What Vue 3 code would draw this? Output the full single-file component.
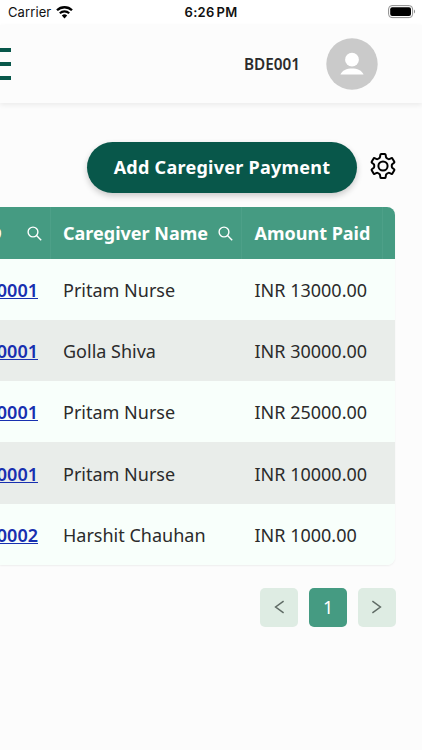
<script setup>
import { ref } from 'vue';

const user = ref('BDE001');
const currentPage = ref(1);

const payments = ref([
  { id: 1, code: '0001', name: 'Pritam Nurse', amount: 'INR 13000.00' },
  { id: 2, code: '0001', name: 'Golla Shiva', amount: 'INR 30000.00' },
  { id: 3, code: '0001', name: 'Pritam Nurse', amount: 'INR 25000.00' },
  { id: 4, code: '0001', name: 'Pritam Nurse', amount: 'INR 10000.00' },
  { id: 5, code: '0002', name: 'Harshit Chauhan', amount: 'INR 1000.00' },
]);
</script>

<template>
  <div class="screen">
    <div class="status">
      <div class="carrier">
        <span>Carrier</span>
        <svg width="17" height="13" viewBox="0 0 17 13" fill="none" stroke="#000">
          <path d="M1 4.3a10.7 10.7 0 0 1 15 0" stroke-width="2.3" />
          <path d="M3.8 7.3a6.8 6.8 0 0 1 9.4 0" stroke-width="2.1" />
          <path d="M8.5 12.4L5.8 9.6a3.9 3.9 0 0 1 5.4 0z" fill="#000" stroke="none" />
        </svg>
      </div>
      <div class="time">6:26<span>PM</span></div>
      <svg class="battery" width="28" height="14" viewBox="0 0 28 14">
        <rect x="0.6" y="0.6" width="24" height="12" rx="3.4" fill="none" stroke="#8e8e8e" />
        <rect x="2.2" y="2.2" width="20.8" height="8.8" rx="2" fill="#000" />
        <path d="M26 4.6c1.4.6 1.4 3.4 0 4z" fill="#8e8e8e" />
      </svg>
    </div>

    <header class="topbar">
      <button class="menu">
        <span></span>
        <span></span>
        <span></span>
      </button>
      <div class="user">
        <span class="username">{{ user }}</span>
        <svg width="52" height="52" viewBox="0 0 52 52">
          <circle cx="26" cy="26" r="25.7" fill="#cacaca" />
          <circle cx="26" cy="21.7" r="6.9" fill="#fff" />
          <path d="M14.4 36.6c1.6-4.4 6.4-6.2 11.6-6.2s10 1.8 11.6 6.2z" fill="#fff" />
        </svg>
      </div>
    </header>

    <div class="actions">
      <button class="add">Add Caregiver Payment</button>
      <svg class="gear" width="26" height="28" viewBox="0 0 26 28" fill="none" stroke="#000" stroke-width="2" stroke-linejoin="round">
        <path d="M11.2 2h3.6q.7 0 .8.7l.4 2.5q.1.6.7.9l1.5.9q.5.3 1.1.1l2.1-.9q.7-.3 1 .3l1.9 3.3q.3.6-.2 1l-1.9 1.5q-.4.4-.4.9v1.6q0 .5.4.9l1.9 1.5q.5.4.2 1l-1.9 3.3q-.3.6-1 .3l-2.1-.9q-.6-.2-1.1.1l-1.5.9q-.6.3-.7.9l-.4 2.500q-.1.7-.8.7h-3.600q-.7 0-.8-.7l-.4-2.500q-.1-.6-.7-.9l-1.500-.9q-.5-.3-1.100-.1l-2.100.9q-.7.3-1-.3L1.700 18.200q-.3-.6.2-1l1.900-1.500q.4-.4.4-.9v-1.600q0-.5-.4-.9l-1.900-1.500q-.5-.4-.2-1L3.600 6.500q.3-.6 1-.3l2.100.9q.6.2 1.100-.1l1.500-.9q.6-.3.7-.9l.4-2.500q.1-.7.8-.7z" />
        <circle cx="13" cy="14" r="4.6" />
      </svg>
    </div>

    <div class="table">
      <div class="row head">
        <div class="cell code">
          <span>ID</span>
          <svg width="15" height="15" viewBox="0 0 15 15" fill="none" stroke="#fff" stroke-width="1.4">
            <circle cx="6" cy="6" r="4.9" />
            <path d="M9.5 9.5l4.7 4.7" />
          </svg>
        </div>
        <div class="cell name">
          <span>Caregiver Name</span>
          <svg width="15" height="15" viewBox="0 0 15 15" fill="none" stroke="#fff" stroke-width="1.4">
            <circle cx="6" cy="6" r="4.9" />
            <path d="M9.5 9.5l4.7 4.7" />
          </svg>
        </div>
        <div class="cell amount">Amount Paid</div>
        <div class="cell"></div>
      </div>
      <div class="row" v-for="item in payments" :key="item.id">
        <div class="cell code"><a>{{ item.code }}</a></div>
        <div class="cell name">{{ item.name }}</div>
        <div class="cell amount">{{ item.amount }}</div>
        <div class="cell"></div>
      </div>
    </div>

    <div class="pagination">
      <button class="page">
        <svg width="11" height="14" viewBox="0 0 11 14" fill="none" stroke="#5f6b65" stroke-width="1.5">
          <path d="M9.6 1.2L1.6 7l8 5.8" />
        </svg>
      </button>
      <button class="page active">{{ currentPage }}</button>
      <button class="page">
        <svg width="11" height="14" viewBox="0 0 11 14" fill="none" stroke="#5f6b65" stroke-width="1.5">
          <path d="M1.4 1.2l8 5.8-8 5.8" />
        </svg>
      </button>
    </div>
  </div>
</template>

<style>
body {
  margin: 0;
  background: #fcfcfc;
}
</style>

<style scoped>
.screen {
  width: 422px;
  height: 750px;
  overflow: hidden;
  background: #fcfcfc;
  font-family: "Noto Sans", sans-serif;
  color: #2b2b2b;
}

button {
  border: none;
  padding: 0;
  font-family: inherit;
}

svg {
  display: block;
  flex-shrink: 0;
}

.status {
  height: 25px;
  box-sizing: border-box;
  padding: 0 6px 1px 8px;
  background: #fff;
  display: grid;
  grid-template-columns: 1fr auto 1fr;
  align-items: center;
  font-family: Inter, sans-serif;
  font-size: 13px;
  color: #111;
}

.carrier {
  display: flex;
  align-items: center;
  gap: 5px;
  letter-spacing: 0.1px;
}

.time {
  display: flex;
  gap: 2px;
  font-weight: 600;
  letter-spacing: 0.25px;
  padding-right: 2px;
}

.battery {
  justify-self: end;
}

.topbar {
  height: 78px;
  display: flex;
  justify-content: space-between;
  align-items: center;
  padding-right: 44px;
  box-shadow: 0 2px 5px rgba(0, 0, 0, 0.07);
}

.menu {
  width: 11px;
  display: flex;
  flex-direction: column;
  gap: 10px;
  background: none;
}

.menu span {
  height: 4px;
  background: #08574a;
}

.user {
  display: flex;
  align-items: center;
  gap: 26px;
}

.username {
  font-size: 15.3px;
  font-weight: 600;
}

.actions {
  display: flex;
  justify-content: flex-end;
  align-items: center;
  gap: 13px;
  padding: 38.5px 26px 0 0;
}

.add {
  width: 270px;
  height: 51.5px;
  border-radius: 26px;
  background: #08574a;
  color: #fff;
  font-size: 18px;
  font-weight: 700;
  letter-spacing: 0.26px;
  box-shadow: 0 3px 6px rgba(0, 0, 0, 0.2);
}

.gear {
  margin-bottom: 3px;
}

.table {
  width: 395px;
  margin-top: 14px;
  border-radius: 0 8px 8px 0;
  overflow: hidden;
  box-shadow: 0 1px 2px rgba(0, 0, 0, 0.06);
}

.row {
  display: grid;
  grid-template-columns: 51px 191px 141px 12px;
  height: 61.3px;
  background: #f8fffb;
  font-size: 18px;
}

.row:nth-child(odd) {
  background: #e9edea;
}

.row.head {
  height: 51.5px;
  background: #459b82;
  color: #fff;
  font-weight: 700;
}

.cell {
  display: flex;
  align-items: center;
  padding-left: 12px;
  padding-top: 1px;
  box-sizing: border-box;
  white-space: nowrap;
  min-width: 0;
}

.cell.amount {
  padding-left: 12.5px;
}

.head .cell {
  border-right: 1px solid #4da088;
}

.head .cell:last-child {
  border-right: none;
}

.code {
  justify-content: flex-end;
  padding: 1px 13px 0 0;
}

.head .code {
  padding-right: 8px;
  gap: 25px;
}

.code a {
  color: #1830b0;
  font-weight: 600;
  text-decoration: underline;
}

.head .name {
  gap: 10px;
}

.pagination {
  display: flex;
  justify-content: flex-end;
  gap: 10.4px;
  padding: 23px 26px 0 0;
}

.page {
  width: 38.4px;
  height: 39px;
  border-radius: 5px;
  background: #deece3;
  display: flex;
  align-items: center;
  justify-content: center;
  font-size: 18px;
}

.page.active {
  background: #459b82;
  color: #fff;
}
</style>
